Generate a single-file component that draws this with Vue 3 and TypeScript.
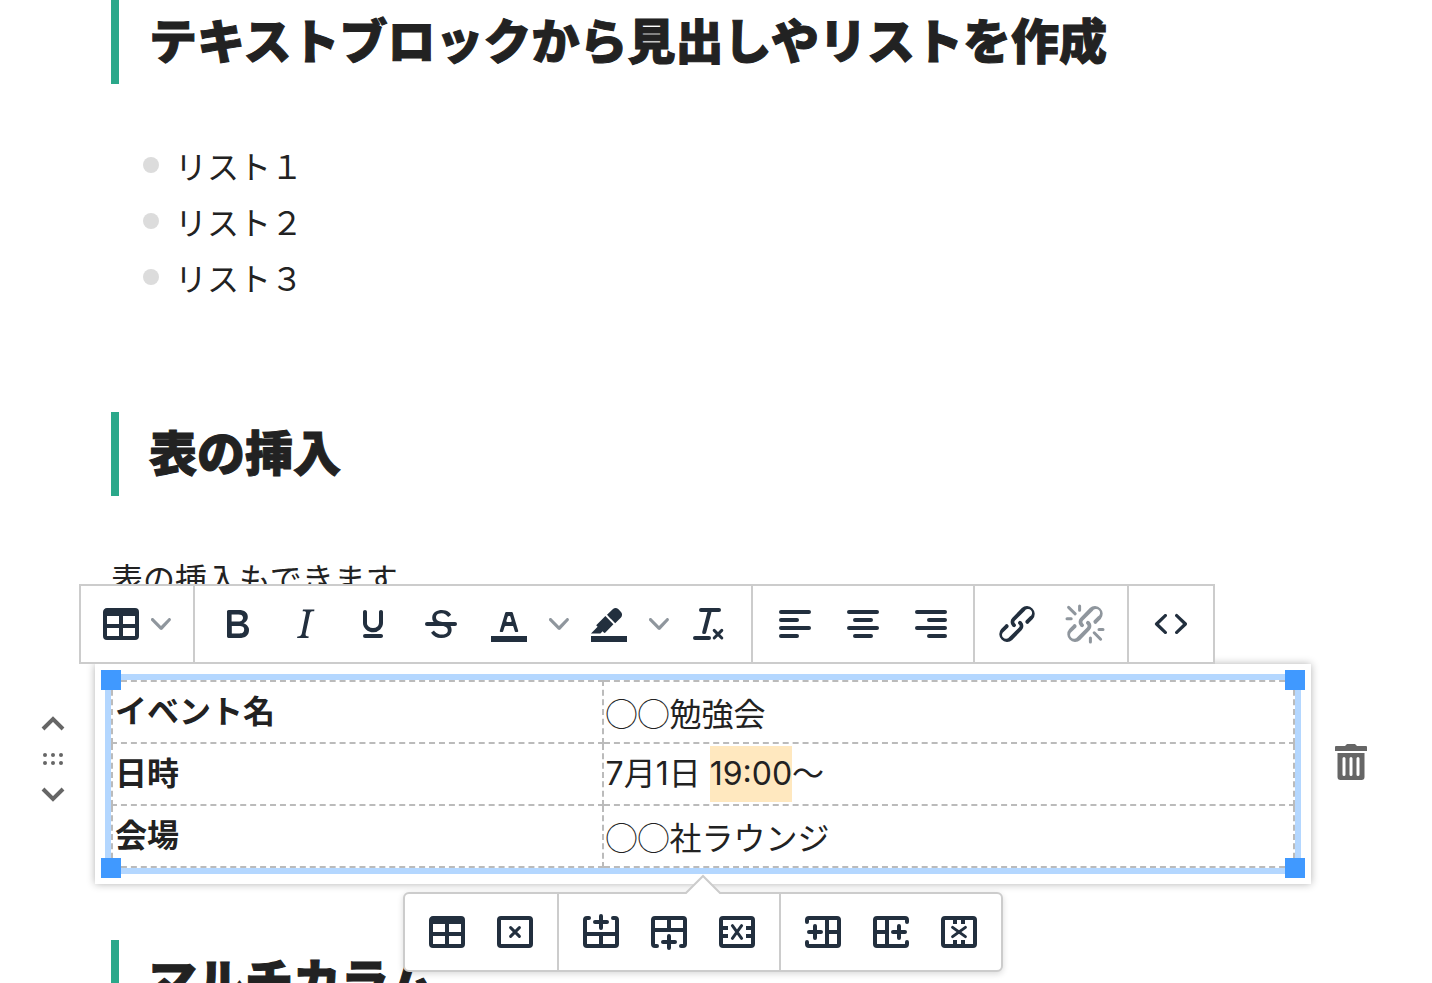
<script setup lang="ts">
interface Icon {
  fill?: string
  stroke?: string
  fine?: string
}

interface Tool {
  label: string
  icon: string
  kind?: 'menu' | 'split'
  disabled?: boolean
}

const link =
  'M6.2 12.3a1 1 0 011.4 1.4l-2.1 2a2 2 0 102.7 2.8l4.8-4.8a1 1 0 000-1.4 1 1 0 111.4-1.3 2.9 2.9 0 010 4L9.6 20a3.9 3.9 0 01-5.5-5.5l2-2zm11.6-.6a1 1 0 01-1.4-1.4l2-2a2 2 0 10-2.6-2.8L11 10.3a1 1 0 000 1.4A1 1 0 119.6 13a2.9 2.9 0 010-4L14.4 4a3.9 3.9 0 015.5 5.5l-2 2z'
const frame = 'M5 5H19A1 1 0 0 1 20 6V18A1 1 0 0 1 19 19H5A1 1 0 0 1 4 18V6A1 1 0 0 1 5 5Z'

const icons: Record<string, Icon> = {
  table: {
    fill: 'M19 4a2 2 0 012 2v12a2 2 0 01-2 2H5a2 2 0 01-2-2V6c0-1.1.9-2 2-2h14zM5 14v4h6v-4H5zm14 0h-6v4h6v-4zm0-6h-6v4h6V8zM5 12h6V8H5v4z',
  },
  bold: {
    fill: 'M7.8 19c-.3 0-.5 0-.6-.2l-.2-.5V5.7c0-.2 0-.4.2-.5l.6-.2h5c1.5 0 2.7.3 3.5 1 .7.6 1.1 1.4 1.1 2.5a3 3 0 01-.6 1.9c-.4.6-1 1-1.6 1.2.4.1.9.3 1.3.6s.8.7 1 1.2c.4.4.5 1 .5 1.6 0 1.3-.4 2.3-1.3 3-.8.7-2.1 1-3.8 1H7.8zm5-8.3c.6 0 1.2-.1 1.6-.5.4-.3.6-.7.6-1.3 0-1.1-.8-1.7-2.3-1.7H9.3v3.5h3.4zm.5 6c.7 0 1.3-.1 1.7-.4.4-.4.6-.9.6-1.5s-.2-1-.7-1.4c-.4-.3-1-.4-2-.4H9.4v3.8h4z',
  },
  italic: {
    fill: 'M16.7 4.7l-.1.9h-.3c-.6 0-1 0-1.4.3-.3.3-.4.6-.5 1.1l-2.1 9.8v.6c0 .5.4.8 1.4.8h.2l-.2.8H8l.2-.8h.2c1.1 0 1.8-.5 2-1.5l2-9.8.1-.5c0-.6-.4-.8-1.4-.8h-.3l.2-.9h5.8z',
  },
  underline: {
    fill: 'M16 5c.6 0 1 .4 1 1v5.5a4 4 0 01-.4 1.8l-1 1.4a5.3 5.3 0 01-5.5 1 5 5 0 01-1.6-1c-.5-.4-.8-.9-1.1-1.4a4 4 0 01-.4-1.8V6c0-.6.4-1 1-1s1 .4 1 1v5.5c0 .3 0 .6.2 1l.6.7a3.3 3.3 0 002.2.8 3.4 3.4 0 002.2-.8c.3-.2.4-.5.6-.8l.2-.9V6c0-.6.4-1 1-1zM8 17h8c.6 0 1 .4 1 1s-.4 1-1 1H8a1 1 0 010-2z',
  },
  strike: {
    fill: 'M15.6 8.5c-.5-.7-1-1.1-1.3-1.3-.6-.4-1.3-.6-2-.6-2.7 0-2.8 1.7-2.8 2.1 0 1.6 1.8 2 3.2 2.3 4.4.9 4.6 2.8 4.6 3.9 0 1.4-.7 4.1-5 4.1A6.2 6.2 0 017 16.4l1.5-1.1c.4.6 1.6 2 3.7 2 1.6 0 2.5-.4 3-1.2.4-.8.3-2-.8-2.6-.7-.4-1.6-.7-2.9-1-1-.2-3.9-.8-3.9-3.6C7.6 6 10.3 5 12.4 5c2.9 0 4.2 1.6 4.7 2.4l-1.5 1.1z',
    stroke: 'M5 12H19',
  },
  color: {
    fill: 'M3 18h18v3H3zM8.7 16h-.8a.5.5 0 01-.5-.6l2.7-9c.1-.3.3-.4.5-.4h2.8c.2 0 .4.1.5.4l2.7 9a.5.5 0 01-.5.6h-.8a.5.5 0 01-.4-.4l-.7-2.2c0-.3-.3-.4-.5-.4h-3.4c-.2 0-.4.1-.5.4l-.7 2.2c0 .3-.2.4-.4.4zm2.6-7.6l-.6 2a.5.5 0 00.5.6h1.6a.5.5 0 00.5-.6l-.6-2c0-.3-.3-.4-.5-.4h-.4c-.2 0-.4.1-.5.4z',
  },
  highlight: {
    fill: 'M3 18h18v3H3zM7.7 16.7H3l3.3-3.3-.7-.8L10.2 8l4 4.1-4 4.2c-.2.2-.6.2-.8 0l-.6-.7-1.1 1.1zm5-7.5L11 7.4l3-2.9a2 2 0 012.6 0L18 6c.7.7.7 2 0 2.7l-2.9 2.9-1.8-1.8-.5-.6z',
  },
  clear: {
    fill: 'M13.2 6a1 1 0 010 .2l-2.6 10a1 1 0 01-1 .8h-.2a.8.8 0 01-.8-1l2.6-10H8a1 1 0 110-2h9a1 1 0 010 2h-3.8zM5 18h7a1 1 0 010 2H5a1 1 0 010-2z',
    fine: 'M14.6 15.2L18.4 19M18.4 15.2L14.6 19',
  },
  left: { stroke: 'M5 6H19M5 10H13M5 14H19M5 18H13' },
  center: { stroke: 'M5 6H19M8 10H16M5 14H19M8 18H16' },
  right: { stroke: 'M5 6H19M11 10H19M5 14H19M11 18H19' },
  link: { fill: link },
  unlink: {
    fill: link,
    fine: 'M3.8 3.7L7.1 6.9M3 9.4H5.1M9.3 3V5.1M16.6 16.4L19.8 19.6M14.7 19V21M19 14.7H21',
  },
  code: {
    fill: 'M9.8 15.7c.3.3.3.8 0 1-.3.4-.9.4-1.2 0l-4.4-4.1a.8.8 0 010-1.2l4.4-4.2c.3-.3.9-.3 1.2 0 .3.3.3.8 0 1.1L6 12l3.8 3.7zM14.2 15.7c-.3.3-.3.8 0 1 .4.4.9.4 1.2 0l4.4-4.1c.3-.3.3-.9 0-1.2l-4.4-4.2a.8.8 0 00-1.2 0c-.3.3-.3.8 0 1.1L18 12l-3.8 3.7z',
  },
  tableDelete: { stroke: frame, fine: 'M9.8 9.8L14.2 14.2M14.2 9.8L9.8 14.2' },
  rowAbove: { stroke: 'M6 5H5A1 1 0 0 0 4 6V18A1 1 0 0 0 5 19H19A1 1 0 0 0 20 18V6A1 1 0 0 0 19 5H18M4 13H20M12 13V19M12 4V10M9 7H15' },
  rowBelow: { stroke: 'M6 19H5A1 1 0 0 1 4 18V6A1 1 0 0 1 5 5H19A1 1 0 0 1 20 6V18A1 1 0 0 1 19 19H18M4 11H20M12 5V11M12 14V20M9 17H15' },
  rowDelete: { stroke: frame, fill: 'M5 9h2.5v2H5zM5 13h2.5v2H5zM16.5 9H19v2h-2.5zM16.5 13H19v2h-2.5z', fine: 'M9.7 8.8L14.3 15.2M14.3 8.8L9.7 15.2' },
  colBefore: { stroke: 'M4 7V6A1 1 0 0 1 5 5H19A1 1 0 0 1 20 6V18A1 1 0 0 1 19 19H5A1 1 0 0 1 4 18V17M14 5V19M14 12H20M8 9V15M5 12H11' },
  colAfter: { stroke: 'M20 7V6A1 1 0 0 0 19 5H5A1 1 0 0 0 4 6V18A1 1 0 0 0 5 19H19A1 1 0 0 0 20 18V17M10 5V19M4 12H10M16 9V15M13 12H19' },
  colDelete: { stroke: frame, fill: 'M9 6h2v2H9zM13 6h2v2h-2zM9 16h2v2H9zM13 16h2v2h-2z', fine: 'M8.8 9.7L15.2 14.3M15.2 9.7L8.8 14.3' },
}

const mainGroups: Tool[][] = [
  [{ label: '表', icon: 'table', kind: 'menu' }],
  [
    { label: '太字', icon: 'bold' },
    { label: '斜体', icon: 'italic' },
    { label: '下線', icon: 'underline' },
    { label: '取り消し線', icon: 'strike' },
    { label: 'テキストの色', icon: 'color', kind: 'split' },
    { label: '背景色', icon: 'highlight', kind: 'split' },
    { label: '書式をクリア', icon: 'clear' },
  ],
  [
    { label: '左寄せ', icon: 'left' },
    { label: '中央揃え', icon: 'center' },
    { label: '右寄せ', icon: 'right' },
  ],
  [
    { label: 'リンク', icon: 'link' },
    { label: 'リンクの解除', icon: 'unlink', disabled: true },
  ],
  [{ label: 'ソースコード', icon: 'code' }],
]

const tableGroups: Tool[][] = [
  [
    { label: '表のプロパティ', icon: 'table' },
    { label: '表の削除', icon: 'tableDelete' },
  ],
  [
    { label: '上に行を挿入', icon: 'rowAbove' },
    { label: '下に行を挿入', icon: 'rowBelow' },
    { label: '行の削除', icon: 'rowDelete' },
  ],
  [
    { label: '左に列を挿入', icon: 'colBefore' },
    { label: '右に列を挿入', icon: 'colAfter' },
    { label: '列の削除', icon: 'colDelete' },
  ],
]

const listItems = ['リスト１', 'リスト２', 'リスト３']
const chevron =
  'M8.7 2.2c.3-.3.8-.3 1 0 .4.4.4.9 0 1.2L5.7 7.8c-.3.3-.9.3-1.2 0L.2 3.4a.8.8 0 010-1.2c.3-.3.8-.3 1.1 0L5 6l3.7-3.8z'
</script>

<template>
  <main class="page">
    <section class="prose">
      <h2>テキストブロックから見出しやリストを作成</h2>
      <ul>
        <li v-for="item in listItems" :key="item">{{ item }}</li>
      </ul>
      <h2>表の挿入</h2>
      <p>表の挿入もできます</p>
    </section>

    <section class="block">
      <div class="side move">
        <button type="button" aria-label="上へ移動">
          <svg width="24" height="16" viewBox="0 0 24 16"><path class="arrow" d="M2 13L12 3L22 13" /></svg>
        </button>
        <button type="button" aria-label="ドラッグして移動">
          <svg width="24" height="12" viewBox="0 0 24 12">
            <circle v-for="n in 6" :key="n" :cx="4 + ((n - 1) % 3) * 8" :cy="n > 3 ? 10 : 2" r="2" />
          </svg>
        </button>
        <button type="button" aria-label="下へ移動">
          <svg width="24" height="16" viewBox="0 0 24 16"><path class="arrow" d="M2 3L12 13L22 3" /></svg>
        </button>
      </div>

      <div class="card">
        <div class="toolbar main-bar" role="toolbar" aria-label="書式">
          <div v-for="(group, g) in mainGroups" :key="g" class="group">
            <template v-for="tool in group" :key="tool.label">
              <button type="button" class="tool" :class="tool.kind" :aria-label="tool.label" :disabled="tool.disabled">
                <svg class="icon" viewBox="0 0 24 24">
                  <path v-if="icons[tool.icon].fill" fill-rule="evenodd" :d="icons[tool.icon].fill" />
                  <path v-if="icons[tool.icon].stroke" class="line" :d="icons[tool.icon].stroke" />
                  <path v-if="icons[tool.icon].fine" class="line fine" :d="icons[tool.icon].fine" />
                </svg>
                <svg v-if="tool.kind === 'menu'" class="chevron" viewBox="0 0 10 10"><path :d="chevron" /></svg>
              </button>
              <button v-if="tool.kind === 'split'" type="button" class="more" :aria-label="tool.label + 'を選択'">
                <svg class="chevron" viewBox="0 0 10 10"><path :d="chevron" /></svg>
              </button>
            </template>
          </div>
        </div>

        <div class="selection">
          <table>
            <colgroup>
              <col class="name" />
              <col />
            </colgroup>
            <tbody>
              <tr>
                <th scope="row">イベント名</th>
                <td class="kana">◯◯勉強会</td>
              </tr>
              <tr>
                <th scope="row">日時</th>
                <td>7月1日 <mark>19:00</mark>〜</td>
              </tr>
              <tr>
                <th scope="row">会場</th>
                <td class="kana">◯◯社ラウンジ</td>
              </tr>
            </tbody>
          </table>
          <i class="handle top start"></i>
          <i class="handle top end"></i>
          <i class="handle bottom start"></i>
          <i class="handle bottom end"></i>
        </div>

        <div class="toolbar table-bar" role="toolbar" aria-label="表">
          <svg class="pointer" viewBox="0 0 36 20"><path d="M1 20V19L18 2L35 19V20Z" /><path class="edge" d="M0 19H1L18 2L35 19H36" /></svg>
          <div v-for="(group, g) in tableGroups" :key="g" class="group">
            <button v-for="tool in group" :key="tool.label" type="button" class="tool" :aria-label="tool.label">
              <svg class="icon" viewBox="0 0 24 24">
                <path v-if="icons[tool.icon].fill" fill-rule="evenodd" :d="icons[tool.icon].fill" />
                <path v-if="icons[tool.icon].stroke" class="line" :d="icons[tool.icon].stroke" />
                <path v-if="icons[tool.icon].fine" class="line fine" :d="icons[tool.icon].fine" />
              </svg>
            </button>
          </div>
        </div>
      </div>

      <div class="side trash">
        <button type="button" aria-label="ブロックを削除">
          <svg width="32" height="36" viewBox="0 0 32 36">
            <path fill-rule="evenodd" d="M1 2H10L12 0H20L22 2H31Q32 2 32 3V7H0V3Q0 2 1 2ZM2.5 9H29.5V33Q29.5 36 26.5 36H5.5Q2.500 36 2.5 33ZM9 13Q7.5 13 7.5 14.5V30.5Q7.5 32 9 32T10.500 30.5V14.5Q10.5 13 9 13ZM16 13Q14.5 13 14.5 14.5V30.5Q14.5 32 16 32T17.5 30.5V14.5Q17.5 13 16 13ZM23 13Q21.5 13 21.5 14.5V30.5Q21.5 32 23 32T24.5 30.5V14.5Q24.5 13 23 13Z" />
          </svg>
        </button>
      </div>
    </section>

    <section class="prose after">
      <h2>マルチカラム</h2>
    </section>
  </main>
</template>

<style>
body {
  margin: 0;
  background: #fff;
}
</style>

<style scoped>
.page {
  height: 100vh;
  overflow: hidden;
  color: #222;
  font-family: Inter, 'Noto Sans CJK JP', sans-serif;
  font-size: 32px;
  line-height: 56px;
}

.prose {
  padding: 0 137px 0 111px;
}

.after {
  padding-top: 56px;
}

h2 {
  margin: 0;
  padding-left: 30px;
  border-left: 8px solid #2aa88a;
  font-size: 48px;
  font-weight: 900;
  line-height: 84px;
  -webkit-text-stroke: 1px currentColor;
}

ul {
  margin: 56px 0 104px;
  padding: 0 0 0 32px;
  list-style: none;
}

li {
  display: flex;
  align-items: center;
  gap: 16px;
}

li::before {
  content: '';
  width: 16px;
  height: 16px;
  margin-bottom: 6px;
  border-radius: 50%;
  background: #dcdcdc;
}

p {
  margin: 56px 0;
}

.block {
  display: grid;
  grid-template-columns: 95px 1fr 121px;
}

button {
  display: flex;
  align-items: center;
  justify-content: center;
  padding: 0;
  border: 0;
  background: none;
  color: inherit;
  font: inherit;
}

svg {
  display: block;
  fill: currentColor;
}

.side {
  display: flex;
  flex-direction: column;
  align-items: center;
  color: #666;
}

.move {
  gap: 21px;
  padding: 52px 0 0 11px;
}

.arrow {
  fill: none;
  stroke: currentColor;
  stroke-width: 4;
}

.trash {
  padding: 80px 41px 0 0;
}

.card {
  position: relative;
  padding: 16px;
  background: #fff;
  box-shadow: 0 0 8px rgba(0, 0, 0, 0.3);
}

.selection {
  position: relative;
  outline: 6px solid #b4d7ff;
}

table {
  width: 100%;
  border-collapse: collapse;
  table-layout: fixed;
}

.name {
  width: 41.5%;
}

th,
td {
  padding: 2px;
  border: 2px dashed #bbb;
  text-align: left;
}

th {
  font-weight: 700;
}

.kana {
  font-family: 'Noto Sans CJK JP', sans-serif;
}

mark {
  display: inline-block;
  background: #ffe8bf;
  color: inherit;
}

.handle {
  position: absolute;
  width: 20px;
  height: 20px;
  background: #4099ff;
}

.top {
  top: -10px;
}

.bottom {
  bottom: -10px;
}

.start {
  left: -10px;
}

.end {
  right: -10px;
}

.toolbar {
  position: absolute;
  display: flex;
  border: 2px solid #ccc;
  background: #fff;
  color: #222f3e;
}

.main-bar {
  bottom: 100%;
  left: -16px;
}

.table-bar {
  z-index: 1;
  top: calc(100% + 8px);
  left: 50%;
  border-radius: 6px;
  box-shadow: 0 2px 6px rgba(0, 0, 0, 0.15);
  transform: translateX(-50%);
}

.pointer {
  position: absolute;
  bottom: 100%;
  left: 50%;
  width: 36px;
  height: 20px;
  margin-left: -18px;
  fill: #fff;
}

.edge {
  fill: none;
  stroke: #ccc;
  stroke-width: 2;
}

.group {
  display: flex;
  padding: 4px 8px;
}

.group + .group {
  border-left: 2px solid #ccc;
}

.tool {
  width: 68px;
  height: 68px;
}

.menu {
  justify-content: flex-start;
  width: 96px;
  gap: 6px;
  padding-left: 8px;
}

.more {
  width: 32px;
}

.icon {
  width: 48px;
  height: 48px;
}

.chevron {
  width: 20px;
  height: 20px;
  opacity: 0.5;
}

.tool:disabled {
  opacity: 0.5;
}

.line {
  fill: none;
  stroke: currentColor;
  stroke-width: 2;
  stroke-linecap: round;
}

.fine {
  stroke-width: 1.5;
}
</style>
